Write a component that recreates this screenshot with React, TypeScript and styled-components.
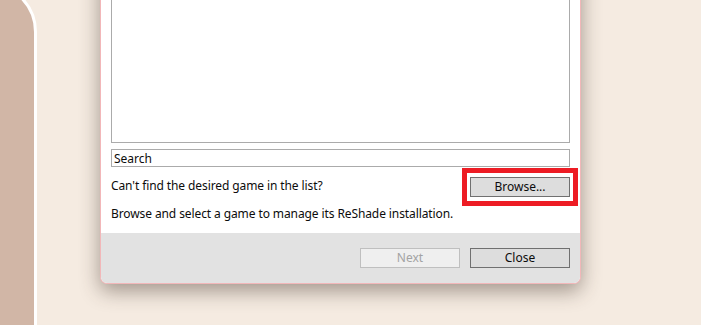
import React from "react";
import styled, { createGlobalStyle } from "styled-components";

const GlobalStyle = createGlobalStyle`
  html, body {
    margin: 0;
    padding: 0;
    background: #f5ebe1;
    overflow: hidden;
  }
  * {
    box-sizing: border-box;
  }
`;

const Stage = styled.div`
  display: flex;
  align-items: flex-start;
  height: 325px;
  overflow: hidden;
  background: #f5ebe1;
  font-family: "Noto Sans", "Open Sans", sans-serif;
  font-size: 12px;
  color: #0c0c0c;
`;

const SidePanel = styled.div`
  flex: none;
  width: 57px;
  height: 400px;
  margin-left: -20px;
  margin-top: -18px;
  background: #d1b6a6;
  border: 3px solid #ffffff;
  border-radius: 0 50px 0 0;
`;

const Dialog = styled.div`
  flex: none;
  align-self: flex-end;
  display: flex;
  flex-direction: column;
  width: 481px;
  margin-left: 63px;
  margin-bottom: 41px;
  background: #ffffff;
  border: 1px solid #f2b7b9;
  border-top: none;
  border-radius: 0 0 7px 7px;
  box-shadow: 0 7px 20px rgba(60, 45, 35, 0.45);
`;

const Body = styled.div`
  display: flex;
  flex-direction: column;
  padding: 0 10px 11px 10px;
`;

const ListBox = styled.div`
  height: 200px;
  border: 1px solid #ababab;
  background: #ffffff;
`;

const SearchBox = styled.input`
  margin-top: 6px;
  height: 18px;
  padding: 0 2px;
  border: 1px solid #ababab;
  font-family: inherit;
  font-size: 12px;
  color: #0c0c0c;
  outline: none;

  &::placeholder {
    color: #0c0c0c;
  }
`;

const Row = styled.div`
  display: flex;
  align-items: center;
  justify-content: space-between;
  margin-top: 1px;
`;

const Label = styled.span<{ lift?: boolean }>`
  line-height: 16px;
  letter-spacing: -0.1px;
  padding-bottom: ${(p) => (p.lift ? "2px" : "0")};
`;

const Highlight = styled.div`
  display: flex;
  padding: 4px 3px;
  margin-right: -8px;
  border: 5px solid #ed1c24;
`;

const Button = styled.button<{ disabled?: boolean }>`
  width: 100px;
  height: 20px;
  padding: 0;
  font-family: inherit;
  font-size: 12px;
  line-height: 18px;
  color: ${(p) => (p.disabled ? "#a3a3a3" : "#0c0c0c")};
  background: ${(p) => (p.disabled ? "#efefef" : "#dddddd")};
  border: 1px solid ${(p) => (p.disabled ? "#bfbfbf" : "#707070")};
  border-radius: 0;
`;

const Footer = styled.div`
  display: flex;
  justify-content: flex-end;
  gap: 10px;
  padding: 15px 10px 15px 10px;
  background: #e2e2e2;
  border-radius: 0 0 6px 6px;
`;

export default function App() {
  return (
    <>
      <GlobalStyle />
      <Stage>
        <SidePanel />
        <Dialog>
          <Body>
            <ListBox />
            <SearchBox placeholder="Search" />
            <Row>
              <Label lift>Can't find the desired game in the list?</Label>
              <Highlight>
                <Button>Browse...</Button>
              </Highlight>
            </Row>
            <Label>Browse and select a game to manage its ReShade installation.</Label>
          </Body>
          <Footer>
            <Button disabled>Next</Button>
            <Button>Close</Button>
          </Footer>
        </Dialog>
      </Stage>
    </>
  );
}
